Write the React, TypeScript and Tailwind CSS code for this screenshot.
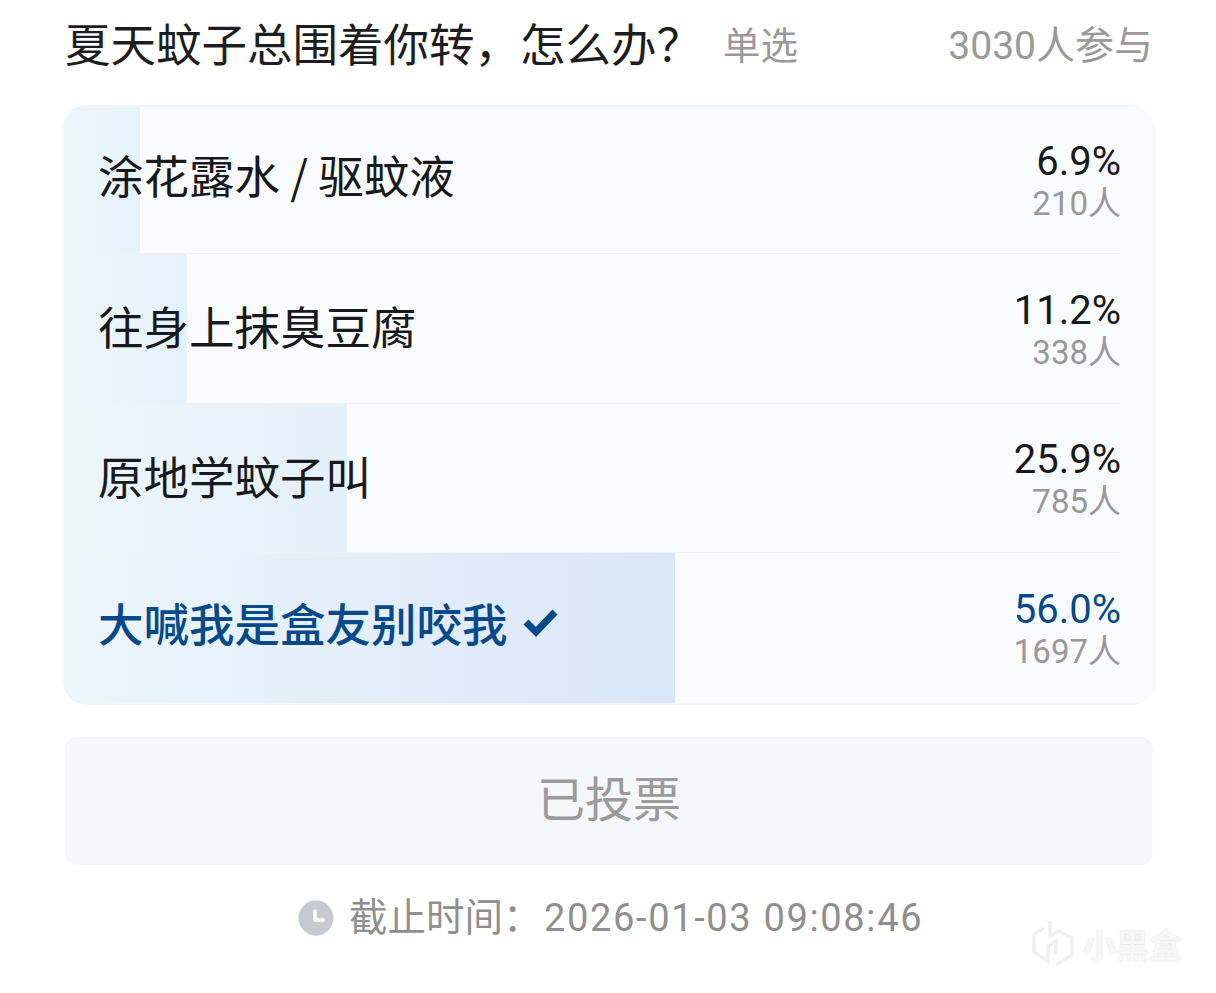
const rows = [
  { text: "涂花露水 / 驱蚊液", pct: "6.9%", count: "210人", bar: "w-[77px] bg-gradient-to-r from-[#edf6fb] to-[#e6f3fb]", h: "h-[147px]", pb: "pb-[10px]" },
  { text: "往身上抹臭豆腐", pct: "11.2%", count: "338人", bar: "w-[124px] bg-gradient-to-r from-[#edf6fb] to-[#e6f2fb]", h: "h-[150px]", pb: "pb-[6px]" },
  { text: "原地学蚊子叫", pct: "25.9%", count: "785人", bar: "w-[284px] bg-gradient-to-r from-[#edf6fb] to-[#e4f0fa]", h: "h-[149px]", pb: "pb-[4px]" },
];

function Watermark() {
  return (
    <div className="absolute left-[1032px] top-[919px] flex items-center gap-[9px]">
      <svg width="42" height="50" viewBox="0 0 42 50" fill="none" stroke="#f0f0f0" strokeWidth="3.5">
        <path d="M12 9 L2 15 V33 L16 42 V27 L24 22 V36" />
        <path d="M18 2 V17 L27 12 L40 19 V36 L24 46" />
      </svg>
      <span className="text-[33px] leading-none text-[#f7f7f7] font-['Noto_Sans_CJK_SC',sans-serif] font-bold [text-shadow:0_0_2px_#dddddd]">小黑盒</span>
    </div>
  );
}

export default function App() {
  return (
    <div className="relative w-[1216px] h-[993px] overflow-hidden bg-white font-['Roboto','Noto_Sans_CJK_SC',sans-serif]">
      <div className="pt-[15px] pb-[3px] pl-[65px] pr-[63px]">
        <div className="flex items-center h-[55px] font-['Noto_Sans_CJK_SC',sans-serif]">
          <span className="text-[45.5px] leading-none text-[#1c1d20]">夏天蚊子总围着你转，怎么办？</span>
          <span className="ml-[21px] text-[37.5px] leading-none text-[#9a9a9a]">单选</span>
          <span className="ml-auto pt-[7px] text-[39px] leading-none text-[#9a9a9a] font-['Roboto','Noto_Sans_CJK_SC',sans-serif]">3030人参与</span>
        </div>
      </div>

      <div className="mx-[63px] mt-[32px] h-[600px] w-[1092px] rounded-[24px] overflow-hidden bg-[#f4f5f8] pt-[2px] pb-[2px] pr-[2px] flex flex-col box-border">
        {rows.map((r) => (
          <div key={r.text} className={`relative ${r.h} shrink-0 bg-[#fafbfd]`}>
            <div className={`absolute left-0 top-0 bottom-0 ${r.bar}`} />
            <div className="relative h-full flex items-center justify-between ml-[34px] mr-[33px] border-b border-[#eff1f5]">
              <span className={`${r.pb} pl-[1px] text-[45.5px] leading-none text-[#17191c] font-['Noto_Sans_CJK_SC',sans-serif]`}>{r.text}</span>
              <div className="flex flex-col items-end pt-[3px] mr-[-1px]">
                <span className="text-[40px] leading-[45px] text-[#17191c]">{r.pct}</span>
                <span className="text-[33px] leading-[40px] text-[#999999]">{r.count}</span>
              </div>
            </div>
          </div>
        ))}
        <div className="relative flex-1 bg-[#fafbfd]">
          <div className="absolute left-0 top-0 bottom-0 w-[612px] bg-gradient-to-r from-[#edf6fb] to-[#d9e6f8]" />
          <div className="relative h-full flex items-center justify-between ml-[34px] mr-[33px]">
            <div className="flex items-center gap-[14px] pb-[10px] pl-[1px]">
              <span className="text-[45.5px] leading-none text-[#064a8c] font-medium font-['Noto_Sans_CJK_SC',sans-serif]">大喊我是盒友别咬我</span>
              <svg width="38" height="32" viewBox="0 0 38 32" fill="none">
                <path d="M4 15 L14 25 L33 5" stroke="#064a8c" strokeWidth="7" />
              </svg>
            </div>
            <div className="flex flex-col items-end pt-[3px] mr-[-1px]">
              <span className="text-[40px] leading-[45px] text-[#064a8c]">56.0%</span>
              <span className="text-[33px] leading-[40px] text-[#999999]">1697人</span>
            </div>
          </div>
        </div>
      </div>

      <div className="ml-[65px] mt-[32px] w-[1088px] h-[128px] rounded-[12px] bg-[#f6f7f9] flex items-center justify-center">
        <span className="pb-[10px] text-[48px] leading-none text-[#9b9b9b] font-['Noto_Sans_CJK_SC',sans-serif]">已投票</span>
      </div>

      <div className="ml-[298px] mt-[30px] flex items-center h-[46px]">
        <svg width="36" height="36" viewBox="0 0 36 36">
          <circle cx="18" cy="18" r="17.5" fill="#c5c9d0" />
          <path d="M17 11 V20 H25" fill="none" stroke="#ffffff" strokeWidth="3.5" strokeLinecap="round" strokeLinejoin="round" />
        </svg>
        <span className="ml-[15px] w-[195px] pb-[8px] text-[38.5px] leading-none text-[#8f8f8f] font-['Noto_Sans_CJK_SC',sans-serif]">截止时间：</span>
        <span className="text-[38px] leading-none text-[#8f8f8f] tracking-[1.65px] font-['Roboto',sans-serif]">2026-01-03 09:08:46</span>
      </div>

      <Watermark />
    </div>
  );
}
